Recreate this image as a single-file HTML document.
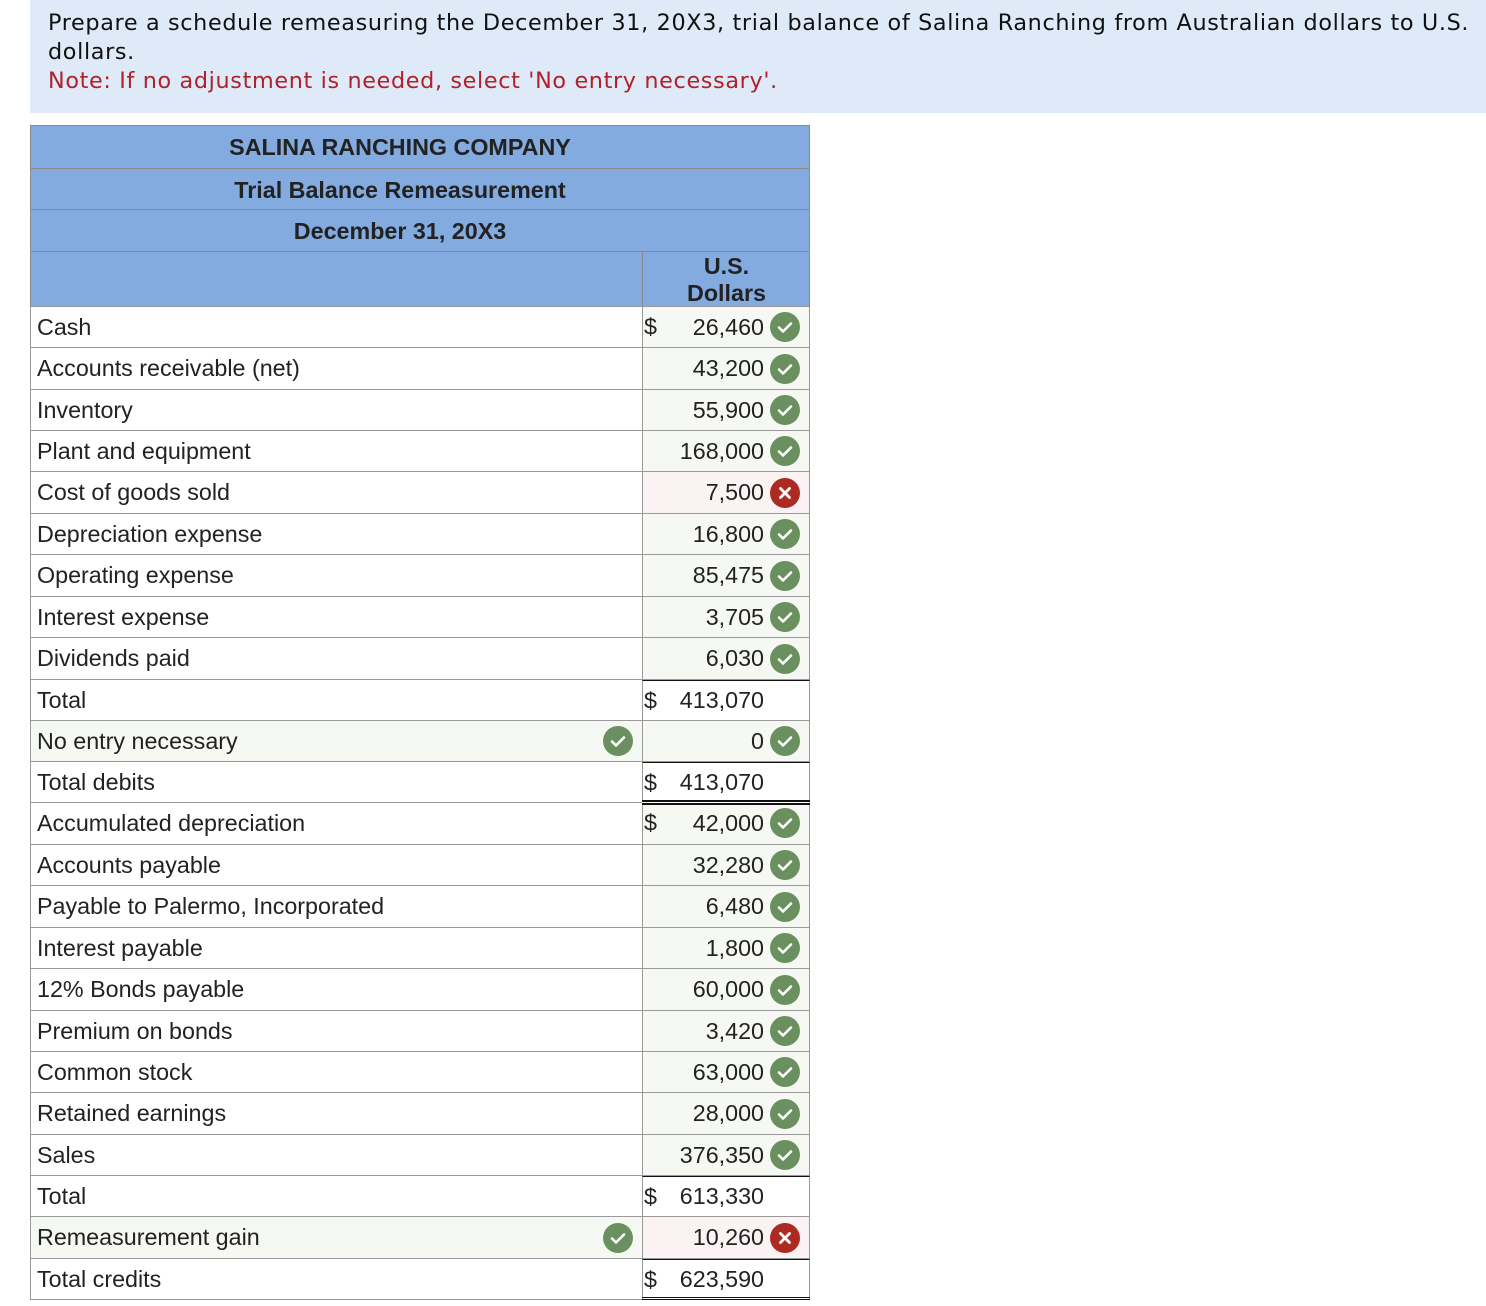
<!DOCTYPE html>
<html><head><meta charset="utf-8"><style>
*{margin:0;padding:0;box-sizing:border-box}
body{width:1486px;height:1306px;background:#fff;position:relative;overflow:hidden;font-family:"Liberation Sans",Arial,sans-serif;color:#222}
.banner{position:absolute;left:30px;top:0;width:1456px;height:113px;background:#deeaf7;padding:9px 0 0 18px;font-family:"DejaVu Sans",Verdana,sans-serif;font-size:22.3px;letter-spacing:0.65px;line-height:29px;color:#111;white-space:nowrap}
.banner .n{color:#b2202a}
.hd{position:absolute;left:30px;width:780px;background:#83abdf;border:1px solid #8a8a8a;border-bottom:none;font-weight:bold;font-size:23.3px;text-align:center;color:#222;padding-right:40px}
.r{position:absolute;left:30px;width:780px;border-top:1px solid #999;font-size:23.3px}
.l{position:absolute;left:0;top:0;bottom:0;width:612px;border-left:1px solid #999;padding-left:6px;display:flex;align-items:center}
.v{position:absolute;left:612px;top:0;bottom:0;width:168px;border-left:1px solid #999;border-right:1px solid #999;display:flex;align-items:center;justify-content:flex-end;padding-right:45px}
.d{position:absolute;left:0;top:50%;transform:translateY(-50%);padding-left:1px}
.ic{position:absolute;width:30px;height:30px;border-radius:50%;top:50%;margin-top:-15px}
.ok{background:#6a9060}.bad{background:#ad2a23}
.ic svg{position:absolute;left:0;top:0}
.in{background:#f6f8f3}.inb{background:#fbf3f3}
</style></head><body>
<div class="banner">Prepare a schedule remeasuring the December 31, 20X3, trial balance of Salina Ranching from Australian dollars to U.S.<br>dollars.<br><span class="n">Note: If no adjustment is needed, select 'No entry necessary'.</span></div>

<div class="hd" style="top:125px;height:43px;line-height:42px">SALINA RANCHING COMPANY</div>
<div class="hd" style="top:168px;height:41px;line-height:42px;border-top:1px solid #8a8a8a">Trial Balance Remeasurement</div>
<div class="hd" style="top:209px;height:42px;line-height:42px;border-top:1px solid #8a8a8a">December 31, 20X3</div>
<div class="hd" style="top:251px;height:55px;border-top:1px solid #8a8a8a;padding-right:0"><div style="position:absolute;left:611px;top:0;bottom:0;width:168px;border-left:1px solid #8a8a8a;line-height:27px;padding-top:1px">U.S.<br>Dollars</div></div>

<div id="rows"></div>
<div style="position:absolute;left:30px;top:1299px;width:613px;border-top:1px solid #999"></div>
<div style="position:absolute;left:642px;top:1297px;width:168px;border-top:3px double #111;height:4px"></div>
<script>
var rows=[
["Cash","26,460","ok",1,0],["Accounts receivable (net)","43,200","ok",0,0],["Inventory","55,900","ok",0,0],["Plant and equipment","168,000","ok",0,0],["Cost of goods sold","7,500","bad",0,0],["Depreciation expense","16,800","ok",0,0],["Operating expense","85,475","ok",0,0],["Interest expense","3,705","ok",0,0],["Dividends paid","6,030","ok",0,0],["Total","413,070","",1,"t"],["No entry necessary","0","ok",0,"lab"],["Total debits","413,070","",1,"t"],["Accumulated depreciation","42,000","ok",1,"dbl"],["Accounts payable","32,280","ok",0,0],["Payable to Palermo, Incorporated","6,480","ok",0,0],["Interest payable","1,800","ok",0,0],["12% Bonds payable","60,000","ok",0,0],["Premium on bonds","3,420","ok",0,0],["Common stock","63,000","ok",0,0],["Retained earnings","28,000","ok",0,0],["Sales","376,350","ok",0,0],["Total","613,330","",1,"t"],["Remeasurement gain","10,260","bad",0,"lab"],["Total credits","623,590","",1,"t"]];
var ys=[306,347,389,430,471,513,554,596,637,679,720,761,802,844,885,927,968,1010,1051,1092,1134,1175,1216,1258,1299];
var chk='<svg width="30" height="30"><path d="M9 15.5l4 4 8-8" fill="none" stroke="#fff" stroke-width="2.6" stroke-linecap="round" stroke-linejoin="round"/></svg>';
var x='<svg width="30" height="30"><path d="M10.5 10.5l9 9M19.5 10.5l-9 9" stroke="#fff" stroke-width="2.8" stroke-linecap="round"/></svg>';
var h='';
rows.forEach(function(r,i){
 var top=ys[i],ht=ys[i+1]-ys[i];
 var vcls=r[2]=='bad'?'inb':(r[2]=='ok'?'in':'');
 var vb='';
 if(r[4]=='t') vb='border-top:1.5px solid #111;';
 var lcls=r[4]=='lab'?'in':'';
 h+='<div class="r" style="top:'+top+'px;height:'+ht+'px">';
 h+='<div class="l '+lcls+'">'+r[0]+(r[4]=='lab'?'<span class="ic ok" style="left:572px">'+chk+'</span>':'')+'</div>';
 h+='<div class="v '+vcls+'" style="'+vb+(r[4]=='dbl'?'top:-1px;':'')+'">'+(r[3]?'<span class="d">$</span>':'')+r[1]+(r[2]?'<span class="ic '+r[2]+'" style="right:9px">'+(r[2]=='ok'?chk:x)+'</span>':'')+'</div>';
 if(r[4]=='dbl') h+='<div style="position:absolute;left:612px;top:-3px;width:168px;height:5px;border-top:2px solid #111;border-bottom:2px solid #111;background:#fff"></div>';
 h+='</div>';
});
document.getElementById('rows').innerHTML=h;
</script>
</body></html>
